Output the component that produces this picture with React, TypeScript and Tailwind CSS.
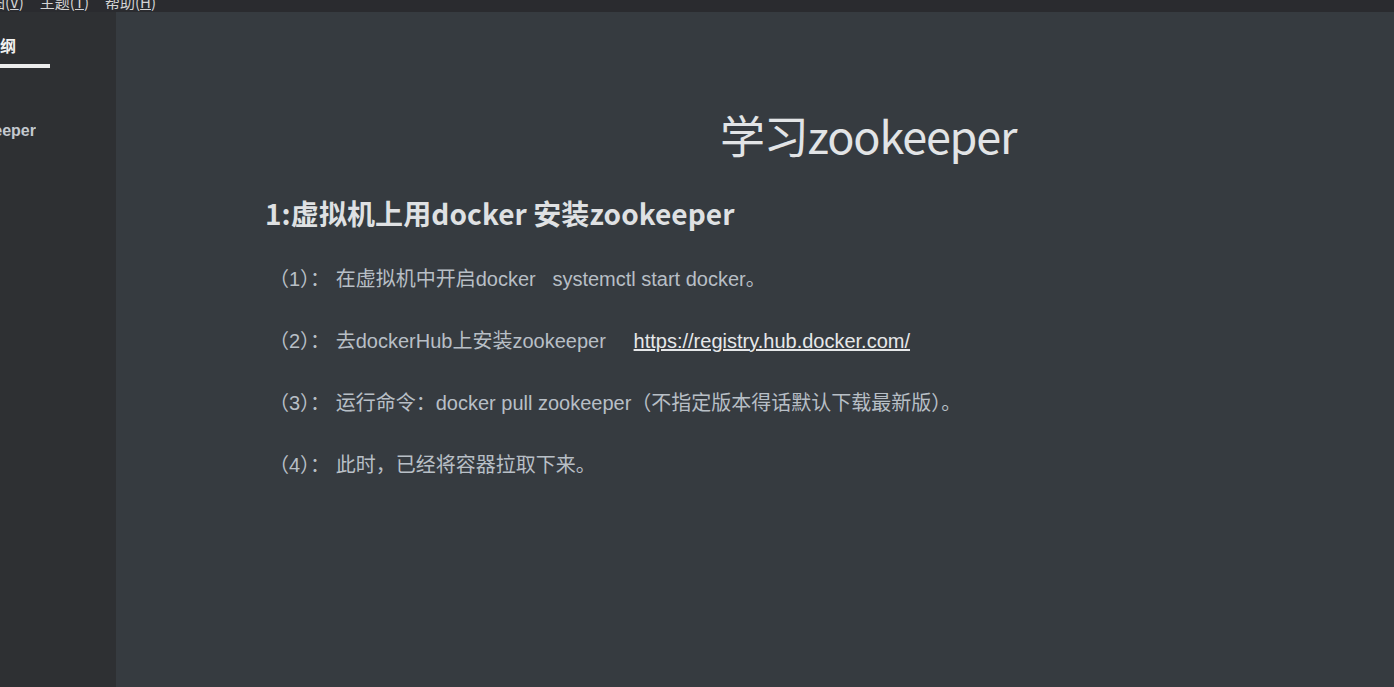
import React from 'react';

const cjk = '"Noto Sans CJK SC", "Noto Sans", sans-serif';
const body = '"Liberation Sans", "Noto Sans CJK SC", Arial, sans-serif';

const menus = [
  { label: '视图', key: 'V' },
  { label: '主题', key: 'T' },
  { label: '帮助', key: 'H' },
];

const steps: { no: string; text: string; link?: string }[] = [
  { no: '（1）： ', text: '在虚拟机中开启docker\u00a0\u00a0\u00a0systemctl start docker。' },
  { no: '（2）： ', text: '去dockerHub上安装zookeeper\u00a0\u00a0\u00a0\u00a0\u00a0', link: 'https://registry.hub.docker.com/' },
  { no: '（3）： ', text: '运行命令：docker pull zookeeper（不指定版本得话默认下载最新版）。' },
  { no: '（4）： ', text: '此时，已经将容器拉取下来。' },
];

export default function App() {
  return (
    <div className="w-[1394px] h-[687px] flex flex-col overflow-hidden bg-[#363b40]">
      <div className="h-[12px] shrink-0 bg-[#2a2b2f] overflow-hidden">
        <div
          className="flex gap-[16px] -mt-[8px] -ml-[25px] text-[15px] text-[#d4d4d4] leading-[20px]"
          style={{ fontFamily: cjk }}
        >
          {menus.map(m => (
            <span key={m.key} className="whitespace-nowrap">
              {m.label}(<span className="underline">{m.key}</span>)
            </span>
          ))}
        </div>
      </div>

      <div className="flex flex-1 min-h-0">
        {/* sidebar */}
        <div className="w-[116px] shrink-0 bg-[#2e3033] flex flex-col overflow-hidden" style={{ fontFamily: cjk }}>
          <div className="mt-[19px] w-[16px] flex justify-end overflow-hidden">
            <span className="whitespace-nowrap text-[16px] font-bold text-[#f2f2f2] leading-[28px]">大纲</span>
          </div>
          <div className="mt-[5px] w-[50px] h-[4px] bg-[#ececec]" />
          <div className="mt-[52px] w-[36px] flex justify-end overflow-hidden">
            <span
              className="whitespace-nowrap text-[16px] font-bold text-[#c4c9cf] leading-[22px]"
              style={{ fontFamily: body }}
            >
              学习zookeeper
            </span>
          </div>
        </div>

        {/* editor */}
        <div className="flex-1 pl-[149px] pt-[93px]">
          <div
            className="pl-[455px] text-[45px] leading-[60px] text-[#e2e4e6] whitespace-nowrap tracking-[-1.2px]"
            style={{ fontFamily: cjk }}
          >
            学习zookeeper
          </div>
          <div
            className="mt-[28px] text-[28px] font-bold leading-[40px] text-[#dfe1e3] whitespace-nowrap tracking-[0.1px]"
            style={{ fontFamily: cjk }}
          >
            1:虚拟机上用docker 安装zookeeper
          </div>
          <div className="mt-[34px] pl-[4px] flex flex-col gap-[38px]" style={{ fontFamily: body }}>
            {steps.map(s => (
              <p key={s.no} className="text-[20px] leading-[24px] text-[#b8bfc6] whitespace-nowrap">
                {s.no}
                {s.text}
                {s.link && <span className="underline text-[#e6e8ea]">{s.link}</span>}
              </p>
            ))}
          </div>
        </div>
      </div>
    </div>
  );
}
